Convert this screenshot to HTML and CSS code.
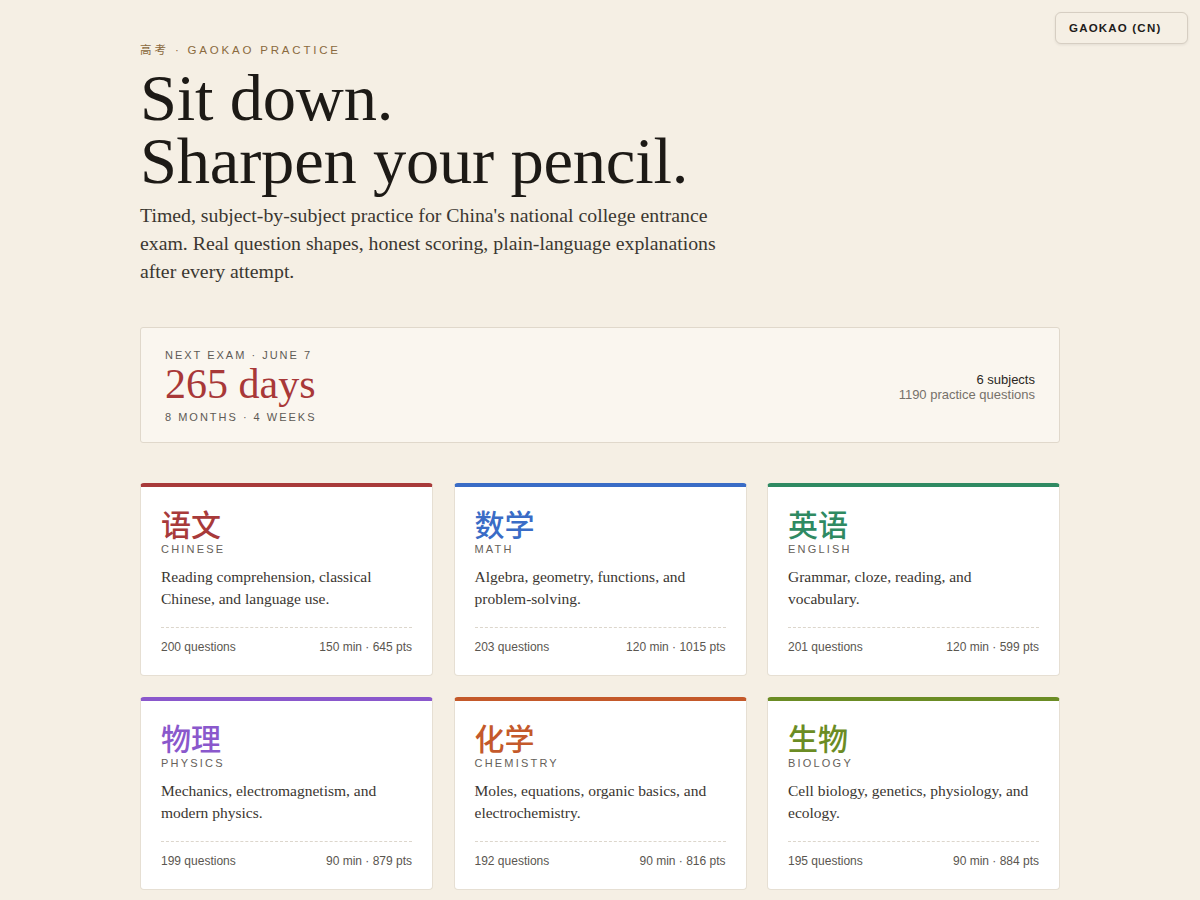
FILE: index.html
```html
<!DOCTYPE html>
<html lang="en">
<head>
<meta charset="utf-8">
<title>Gaokao Practice</title>
<link rel="stylesheet" href="styles.css">
</head>
<body>
<div class="region-badge">GAOKAO (CN)</div>
<main class="page">
  <header class="hero">
    <div class="eyebrow"><span class="cjk">高考</span> · GAOKAO PRACTICE</div>
    <h1 class="title"><span class="title-line">Sit down.</span><span class="title-line">Sharpen your pencil.</span></h1>
    <p class="lede">Timed, subject-by-subject practice for China's national college entrance exam. Real question shapes, honest scoring, plain-language explanations after every attempt.</p>
  </header>

  <section class="countdown">
    <div class="countdown-left">
      <div class="small-caps">NEXT EXAM · JUNE 7</div>
      <div class="days">265 days</div>
      <div class="small-caps">8 MONTHS · 4 WEEKS</div>
    </div>
    <div class="countdown-right">
      <div class="stat-main">6 subjects</div>
      <div class="stat-sub">1190 practice questions</div>
    </div>
  </section>

  <section class="subjects">
    <article class="card c-chinese">
      <div class="card-zh">语文</div>
      <div class="card-en">CHINESE</div>
      <p class="card-desc">Reading comprehension, classical Chinese, and language use.</p>
      <div class="card-foot"><span>200 questions</span><span>150 min · 645 pts</span></div>
    </article>
    <article class="card c-math">
      <div class="card-zh">数学</div>
      <div class="card-en">MATH</div>
      <p class="card-desc">Algebra, geometry, functions, and problem-solving.</p>
      <div class="card-foot"><span>203 questions</span><span>120 min · 1015 pts</span></div>
    </article>
    <article class="card c-english">
      <div class="card-zh">英语</div>
      <div class="card-en">ENGLISH</div>
      <p class="card-desc">Grammar, cloze, reading, and vocabulary.</p>
      <div class="card-foot"><span>201 questions</span><span>120 min · 599 pts</span></div>
    </article>
    <article class="card c-physics">
      <div class="card-zh">物理</div>
      <div class="card-en">PHYSICS</div>
      <p class="card-desc">Mechanics, electromagnetism, and modern physics.</p>
      <div class="card-foot"><span>199 questions</span><span>90 min · 879 pts</span></div>
    </article>
    <article class="card c-chem">
      <div class="card-zh">化学</div>
      <div class="card-en">CHEMISTRY</div>
      <p class="card-desc">Moles, equations, organic basics, and electrochemistry.</p>
      <div class="card-foot"><span>192 questions</span><span>90 min · 816 pts</span></div>
    </article>
    <article class="card c-bio">
      <div class="card-zh">生物</div>
      <div class="card-en">BIOLOGY</div>
      <p class="card-desc">Cell biology, genetics, physiology, and ecology.</p>
      <div class="card-foot"><span>195 questions</span><span>90 min · 884 pts</span></div>
    </article>
  </section>
</main>
</body>
</html>
```

FILE: styles.css
```css
* { box-sizing: border-box; }
html, body { margin: 0; padding: 0; }
body {
  background: #f5efe4;
  color: #1f1c18;
  font-family: "Liberation Serif", "Noto Sans CJK SC", serif;
}
.page {
  width: 920px;
  margin: 0 auto;
  padding-top: 42px;
}
.region-badge {
  position: absolute;
  top: 12px;
  right: 12px;
  width: 133px;
  height: 32px;
  display: flex;
  align-items: center;
  padding-left: 13px;
  background: #f5efe4;
  border: 1px solid #d6cec2;
  border-radius: 6px;
  box-shadow: 0 1px 3px rgba(0,0,0,0.08);
  font-family: "Liberation Sans", Arial, sans-serif;
  font-weight: 700;
  font-size: 11.5px;
  letter-spacing: 1.2px;
  color: #1e1c1a;
}
.eyebrow {
  font-family: "Liberation Sans", "Noto Sans CJK SC", sans-serif;
  font-size: 11.5px;
  letter-spacing: 2.8px;
  color: #8a6a3e;
  line-height: 16px;
}
.eyebrow .cjk { letter-spacing: 3px; }
.title {
  margin: 8px 0 0;
  font-family: "Liberation Serif", serif;
  font-weight: 400;
  font-size: 66.5px;
  line-height: 63px;
  letter-spacing: -0.2px;
  color: #1d1a16;
}
.title-line { display: block; }
.lede {
  margin: 9px 0 0;
  max-width: 600px;
  font-size: 19.8px;
  line-height: 28px;
  color: #3b3731;
}
.countdown {
  margin-top: 42px;
  background: #faf6ef;
  border: 1px solid #e0d8cb;
  border-radius: 3px;
  padding: 20px 24px 18px;
  display: flex;
  justify-content: space-between;
  align-items: center;
}
.small-caps {
  font-family: "Liberation Sans", sans-serif;
  font-size: 11px;
  letter-spacing: 2px;
  color: #5e5a55;
  line-height: 14px;
}
.days {
  font-size: 42px;
  line-height: 44px;
  color: #a83838;
  margin: 0 0 4px;
}
.countdown-right {
  text-align: right;
  font-family: "Liberation Sans", sans-serif;
  font-size: 13px;
  line-height: 15px;
  padding-top: 1px;
}
.stat-main { color: #2a2723; }
.stat-sub { color: #76716a; }

.subjects {
  margin-top: 40px;
  display: grid;
  grid-template-columns: repeat(3, 1fr);
  gap: 21px 20.5px;
  padding-bottom: 20px;
}
.card {
  background: #ffffff;
  border: 1px solid #e6dfd3;
  border-top: 4px solid #a83838;
  border-radius: 4px;
  padding: 19px 20px 20px;
}
.card-zh {
  font-family: "Noto Sans CJK SC", sans-serif;
  font-size: 30px;
  line-height: 34px;
  font-weight: 500;
}
.card-en {
  font-family: "Liberation Sans", sans-serif;
  font-size: 11px;
  letter-spacing: 2.2px;
  color: #66615a;
  line-height: 13px;
  margin-top: 3px;
}
.card-desc {
  margin: 10px 0 0;
  font-size: 15.5px;
  line-height: 22px;
  color: #3a3631;
  min-height: 44px;
}
.card-foot {
  margin-top: 17px;
  padding-top: 12px;
  border-top: 1px dashed #dcd6cc;
  display: flex;
  justify-content: space-between;
  font-family: "Liberation Sans", sans-serif;
  font-size: 12px;
  line-height: 15px;
  color: #5a5650;
}
.c-chinese { border-top-color: #a83a3a; }
.c-chinese .card-zh { color: #a83a3a; }
.c-math { border-top-color: #3a6cc6; }
.c-math .card-zh { color: #3a6cc6; }
.c-english { border-top-color: #2f8a62; }
.c-english .card-zh { color: #2f8a62; }
.c-physics { border-top-color: #8a58cc; }
.c-physics .card-zh { color: #8a58cc; }
.c-chem { border-top-color: #c4592a; }
.c-chem .card-zh { color: #c4592a; }
.c-bio { border-top-color: #6b8c24; }
.c-bio .card-zh { color: #6b8c24; }
```
